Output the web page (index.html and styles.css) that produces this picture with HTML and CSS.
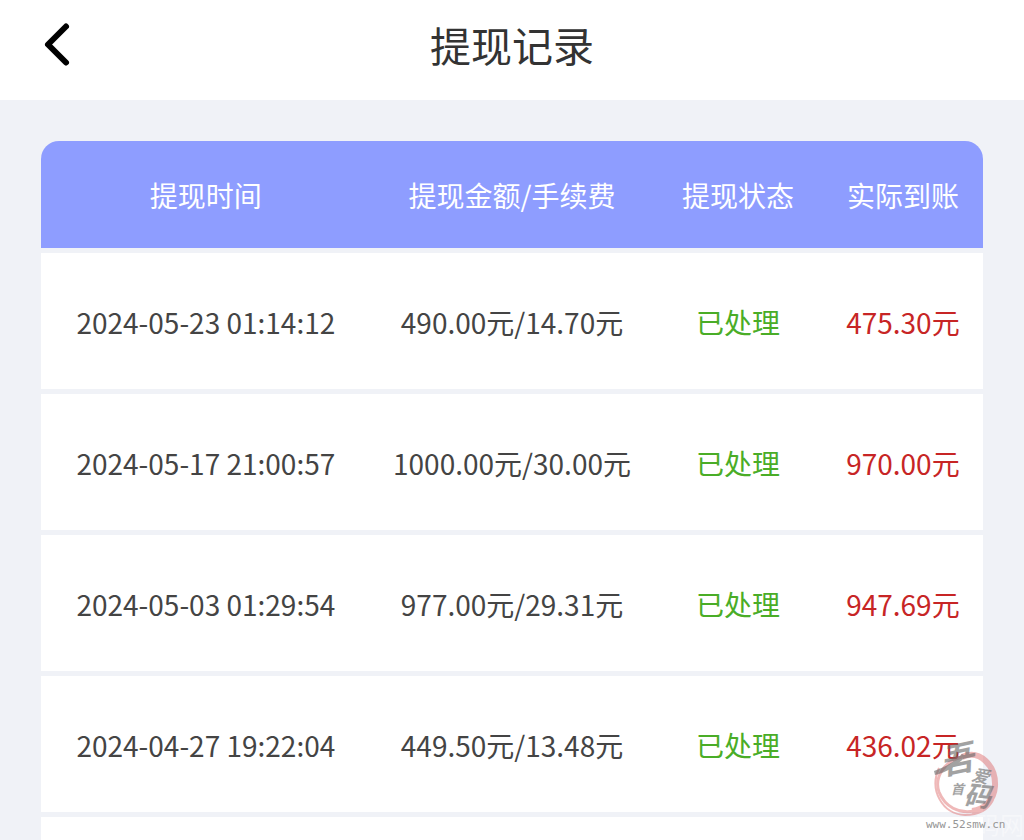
FILE: index.html
```
<!DOCTYPE html>
<html lang="zh-CN">
<head>
<meta charset="utf-8">
<meta name="viewport" content="width=device-width, initial-scale=1">
<title>提现记录</title>
<link rel="stylesheet" href="styles.css">
</head>
<body>
<header class="topbar">
  <button class="back" type="button" aria-label="返回">
    <svg viewBox="0 0 32 48" width="32" height="48" aria-hidden="true"><path d="M26 6.500 L8 24.500 L26 42.500"/></svg>
  </button>
  <h1 class="title">提现记录</h1>
</header>
<main class="content">
  <table class="records">
    <colgroup><col class="col-time"><col class="col-amount"><col class="col-status"><col class="col-net"></colgroup>
    <thead>
      <tr><th scope="col">提现时间</th><th scope="col">提现金额/手续费</th><th scope="col">提现状态</th><th scope="col">实际到账</th></tr>
    </thead>
    <tbody>
      <tr><td>2024-05-23 01:14:12</td><td>490.00元/14.70元</td><td class="done">已处理</td><td class="net">475.30元</td></tr>
      <tr><td>2024-05-17 21:00:57</td><td>1000.00元/30.00元</td><td class="done">已处理</td><td class="net">970.00元</td></tr>
      <tr><td>2024-05-03 01:29:54</td><td>977.00元/29.31元</td><td class="done">已处理</td><td class="net">947.69元</td></tr>
      <tr><td>2024-04-27 19:22:04</td><td>449.50元/13.48元</td><td class="done">已处理</td><td class="net">436.02元</td></tr>
      <tr class="next"><td></td><td></td><td></td><td></td></tr>
    </tbody>
  </table>
</main>
<svg class="watermark" viewBox="0 0 104 108" width="104" height="108" aria-hidden="true">
  <g class="ring">
    <path stroke-width="6" d="M42 25 C60 17 76 34 75 54 C74 68 64 78 52 79"/>
    <path stroke-width="3" d="M42 25 C24 29 14 46 19 60 C25 75 39 82 54 79"/>
    <path stroke-width="2" d="M19 36 C9 58 22 82 45 83 C58 83 68 78 73 68"/>
  </g>
  <g class="brush">
    <text x="20" y="40" font-size="34" transform="rotate(-12 36 28)">吾</text>
    <text x="31" y="62" font-size="13">首</text>
    <text x="52" y="50" font-size="17" transform="rotate(12 60 44)">爱</text>
    <text x="44" y="74" font-size="27" transform="rotate(6 58 64)">码</text>
    <path d="M14 39 C23 36 33 31 42 22 L46 24 C37 34 25 41 15 43 Z"/>
  </g>
  <text class="ghost" x="56" y="102">码网</text>
  <text class="site" x="6" y="96">www.52smw.cn</text>
</svg>
</body>
</html>
```
FILE: styles.css
```
* { box-sizing: border-box; }

body {
  margin: 0;
  height: 100vh;
  overflow: hidden;
  position: relative;
  background: #f0f2f7;
  color: #444;
  font-family: "Noto Sans CJK SC", sans-serif;
  font-size: 28px;
  line-height: 40px;
}

.topbar {
  display: grid;
  grid-template-columns: 80px 1fr 80px;
  align-items: center;
  height: 100px;
  padding-bottom: 12px;
  background: #fff;
}

.back {
  justify-self: end;
  display: flex;
  margin-right: 8px;
  padding: 0;
  border: 0;
  background: none;
}

.back path {
  fill: none;
  stroke: #000;
  stroke-width: 6;
  stroke-linecap: round;
  stroke-linejoin: round;
}

.title {
  margin: 0;
  color: #333;
  font-size: 41px;
  font-weight: 400;
  line-height: 60px;
  text-align: center;
}

.content { padding: 36px 41px 0; }

.records {
  width: 100%;
  table-layout: fixed;
  border-collapse: separate;
  border-spacing: 0 5px;
  text-align: center;
}

.col-time { width: 35%; }
.col-amount { width: 30%; }
.col-status { width: 18%; }
.col-net { width: 17%; }

.records th {
  padding: 34px 0 33px;
  background: #8e9dff;
  color: #fff;
  font-weight: 400;
}

.records th:first-child { border-top-left-radius: 18px; }
.records th:last-child { border-top-right-radius: 18px; }

.records td {
  padding: 49px 0 47px;
  background: #fff;
  white-space: nowrap;
}

.records .next td { height: 24px; padding: 0; }

.records .done { color: #4aad27; }
.records .net { color: #c72525; }

.watermark {
  position: absolute;
  right: 0;
  bottom: 0;
  overflow: visible;
}

.ring { fill: none; stroke: #dc6464; opacity: 0.45; }
.brush { fill: #666; font-style: italic; font-weight: 700; opacity: 0.6; }

.site {
  fill: #969696;
  font-family: "DejaVu Sans Mono", monospace;
  font-size: 11px;
}

.ghost { fill: #fff; font-size: 24px; opacity: 0.4; }
```
